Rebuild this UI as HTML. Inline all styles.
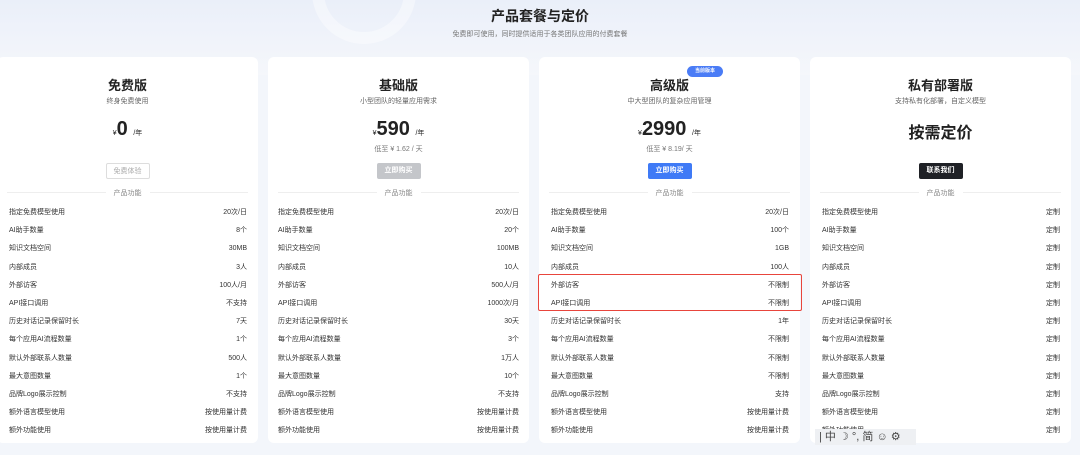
<!DOCTYPE html>
<html><head><meta charset="utf-8"><style>
*{margin:0;padding:0;box-sizing:border-box}
body{width:1080px;height:455px;overflow:hidden;background:#f3f6fb;font-family:"Liberation Sans","Noto Sans CJK SC",sans-serif;color:#222;position:relative}
.bg{position:absolute;left:0;top:0;width:1080px;height:75px;background:linear-gradient(180deg,#eaeff9,#f5f7fb)}
.ring{position:absolute;left:312px;top:-60px;width:104px;height:104px;border-radius:50%;border:12px solid rgba(255,255,255,.4)}
.h1{position:absolute;top:6px;left:0;width:1080px;text-align:center;font-size:14px;font-weight:bold}
.h2{position:absolute;top:29px;left:0;width:1080px;text-align:center;font-size:7px;color:#777}
.card{position:absolute;top:57px;width:261px;height:386px;background:#fff;border-radius:6px}
.t{position:absolute;width:100%;text-align:center;font-size:13px;font-weight:bold}
.s{position:absolute;width:100%;text-align:center;font-size:7px;color:#666}
.p{position:absolute;width:100%;text-align:center;font-weight:bold;font-size:20px}
.p small{font-size:7px;font-weight:normal}
.l{position:absolute;width:100%;text-align:center;font-size:7px;color:#777}
.b{position:absolute;left:50%;margin-left:-22px;width:44px;height:16px;border-radius:2px;font-size:7px;text-align:center;line-height:16px;color:#fff;font-weight:bold}
.d{position:absolute;left:10px;right:10px;height:9px;font-size:7px;color:#888;text-align:center}
.d:before{content:"";position:absolute;left:0;right:0;top:4px;border-top:1px solid #eee}
.d span{position:relative;background:#fff;padding:0 8px}
.rows{position:absolute;left:10px;right:10px}
.r{height:18.2px;line-height:10px;font-size:7px;display:flex;justify-content:space-between;align-items:flex-start;color:#333;overflow:hidden}
.r span{display:block;height:10px;line-height:10px}
</style></head><body>
<div class="bg"></div><div class="ring"></div>
<div class="h1">产品套餐与定价</div>
<div class="h2">免费即可使用，同时提供适用于各类团队应用的付费套餐</div>

<div class="card" style="left:-3px">
<div class="t" style="top:18px">免费版</div><div class="s" style="top:39px">终身免费使用</div>
<div class="p" style="top:61px"><small>¥</small>0 <small>/年</small></div>
<div class="b" style="top:106px;background:#fff;border:1px solid #ddd;color:#aaa;font-weight:normal">免费体验</div>
<div class="d" style="top:131px"><span>产品功能</span></div>
<div class="rows" style="top:151px;left:12px;right:11px">
<div class="r"><span>指定免费模型使用</span><span>20次/日</span></div>
<div class="r"><span>AI助手数量</span><span>8个</span></div>
<div class="r"><span>知识文档空间</span><span>30MB</span></div>
<div class="r"><span>内部成员</span><span>3人</span></div>
<div class="r"><span>外部访客</span><span>100人/月</span></div>
<div class="r"><span>API接口调用</span><span>不支持</span></div>
<div class="r"><span>历史对话记录保留时长</span><span>7天</span></div>
<div class="r"><span>每个应用AI流程数量</span><span>1个</span></div>
<div class="r"><span>默认外部联系人数量</span><span>500人</span></div>
<div class="r"><span>最大意图数量</span><span>1个</span></div>
<div class="r"><span>品牌Logo展示控制</span><span>不支持</span></div>
<div class="r"><span>额外语言模型使用</span><span>按使用量计费</span></div>
<div class="r"><span>额外功能使用</span><span>按使用量计费</span></div>
</div></div>

<div class="card" style="left:268px">
<div class="t" style="top:18px">基础版</div><div class="s" style="top:39px">小型团队的轻量应用需求</div>
<div class="p" style="top:61px"><small>¥</small>590 <small>/年</small></div>
<div class="l" style="top:87px">低至 ¥ 1.62 / 天</div>
<div class="b" style="top:106px;background:#c4c6ca">立即购买</div>
<div class="d" style="top:131px"><span>产品功能</span></div>
<div class="rows" style="top:151px">
<div class="r"><span>指定免费模型使用</span><span>20次/日</span></div>
<div class="r"><span>AI助手数量</span><span>20个</span></div>
<div class="r"><span>知识文档空间</span><span>100MB</span></div>
<div class="r"><span>内部成员</span><span>10人</span></div>
<div class="r"><span>外部访客</span><span>500人/月</span></div>
<div class="r"><span>API接口调用</span><span>1000次/月</span></div>
<div class="r"><span>历史对话记录保留时长</span><span>30天</span></div>
<div class="r"><span>每个应用AI流程数量</span><span>3个</span></div>
<div class="r"><span>默认外部联系人数量</span><span>1万人</span></div>
<div class="r"><span>最大意图数量</span><span>10个</span></div>
<div class="r"><span>品牌Logo展示控制</span><span>不支持</span></div>
<div class="r"><span>额外语言模型使用</span><span>按使用量计费</span></div>
<div class="r"><span>额外功能使用</span><span>按使用量计费</span></div>
</div></div>

<div class="card" style="left:539px">
<div style="position:absolute;left:148px;top:9px;width:36px;height:11px;border-radius:6px;background:#4a7cf6;color:#fff;font-size:5px;text-align:center;line-height:11px;font-weight:bold">当前版本</div>
<div class="t" style="top:18px">高级版</div><div class="s" style="top:39px">中大型团队的复杂应用管理</div>
<div class="p" style="top:61px"><small>¥</small>2990 <small>/年</small></div>
<div class="l" style="top:87px">低至 ¥ 8.19/ 天</div>
<div class="b" style="top:106px;background:#3f7af6">立即购买</div>
<div class="d" style="top:131px"><span>产品功能</span></div>
<div class="rows" style="top:151px;left:12px;right:11px">
<div class="r"><span>指定免费模型使用</span><span>20次/日</span></div>
<div class="r"><span>AI助手数量</span><span>100个</span></div>
<div class="r"><span>知识文档空间</span><span>1GB</span></div>
<div class="r"><span>内部成员</span><span>100人</span></div>
<div class="r"><span>外部访客</span><span>不限制</span></div>
<div class="r"><span>API接口调用</span><span>不限制</span></div>
<div class="r"><span>历史对话记录保留时长</span><span>1年</span></div>
<div class="r"><span>每个应用AI流程数量</span><span>不限制</span></div>
<div class="r"><span>默认外部联系人数量</span><span>不限制</span></div>
<div class="r"><span>最大意图数量</span><span>不限制</span></div>
<div class="r"><span>品牌Logo展示控制</span><span>支持</span></div>
<div class="r"><span>额外语言模型使用</span><span>按使用量计费</span></div>
<div class="r"><span>额外功能使用</span><span>按使用量计费</span></div>
</div></div>

<div class="card" style="left:810px">
<div class="t" style="top:18px">私有部署版</div><div class="s" style="top:39px">支持私有化部署，自定义模型</div>
<div class="p" style="top:62px;font-size:16px">按需定价</div>
<div class="b" style="top:106px;background:#1f2126">联系我们</div>
<div class="d" style="top:131px"><span>产品功能</span></div>
<div class="rows" style="top:151px;left:12px;right:11px">
<div class="r"><span>指定免费模型使用</span><span>定制</span></div>
<div class="r"><span>AI助手数量</span><span>定制</span></div>
<div class="r"><span>知识文档空间</span><span>定制</span></div>
<div class="r"><span>内部成员</span><span>定制</span></div>
<div class="r"><span>外部访客</span><span>定制</span></div>
<div class="r"><span>API接口调用</span><span>定制</span></div>
<div class="r"><span>历史对话记录保留时长</span><span>定制</span></div>
<div class="r"><span>每个应用AI流程数量</span><span>定制</span></div>
<div class="r"><span>默认外部联系人数量</span><span>定制</span></div>
<div class="r"><span>最大意图数量</span><span>定制</span></div>
<div class="r"><span>品牌Logo展示控制</span><span>定制</span></div>
<div class="r"><span>额外语言模型使用</span><span>定制</span></div>
<div class="r"><span>额外功能使用</span><span>定制</span></div>
</div></div>

<div style="position:absolute;left:538px;top:274px;width:264px;height:37px;border:1.5px solid #e8453c;border-radius:2px"></div>
<div style="position:absolute;left:815px;top:429px;width:101px;height:16px;background:#eef0f3;font-size:11px;color:#444;line-height:16px;padding-left:4px;white-space:nowrap">| 中 ☽ °, 简 ☺ ⚙</div>
</body></html>
